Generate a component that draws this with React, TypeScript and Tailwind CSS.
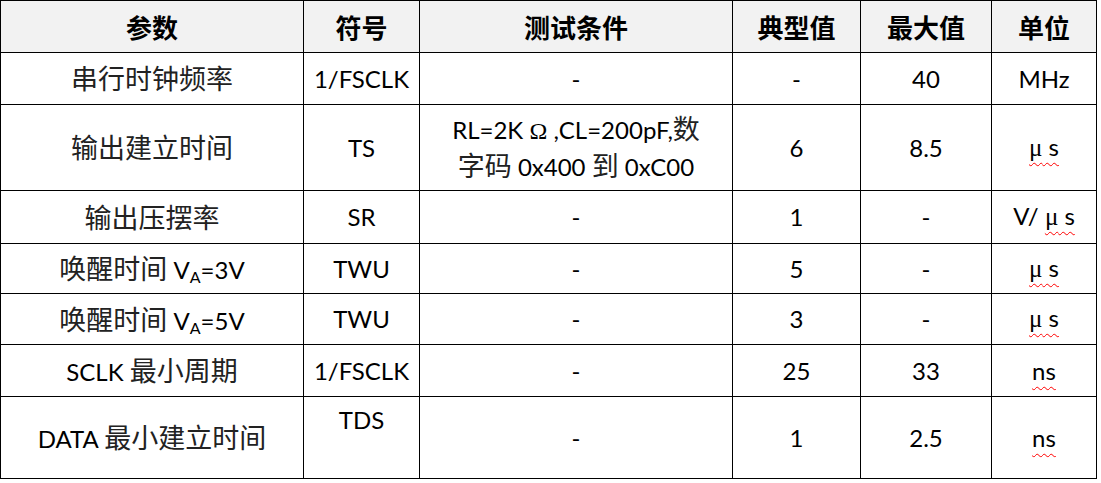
import React from "react";

const C = ({ children }: { children: React.ReactNode }) => (
  <span className="text-[27px] font-['Noto_Sans_CJK_SC',sans-serif] text-[#222]">{children}</span>
);

const Mu = () => (
  <span className="underline decoration-wavy decoration-[#ff0000] decoration-1 underline-offset-[6px] [text-decoration-skip-ink:none]">
    <span className="font-['Liberation_Serif',serif] text-[25px]">μ</span> s
  </span>
);

const NS = () => (
  <span className="underline decoration-wavy decoration-[#ff0000] decoration-1 underline-offset-[6px] [text-decoration-skip-ink:none]">
    ns
  </span>
);

const Sub = ({ children }: { children: React.ReactNode }) => (
  <span className="text-[16px] align-[-4px]">{children}</span>
);

type Cell = React.ReactNode;

const rows: Cell[][] = [
  [<C>串行时钟频率</C>, "1/FSCLK", "-", "-", "40", "MHz"],
  [
    <C>输出建立时间</C>,
    "TS",
    <div className="leading-[34px]">
      <div>
        RL=2K <span className="font-['Liberation_Serif',serif]">Ω</span> ,CL=200pF,<C>数</C>
      </div>
      <div>
        <C>字码</C> 0x400 <C>到</C> 0xC00
      </div>
    </div>,
    "6",
    "8.5",
    <Mu />,
  ],
  [<C>输出压摆率</C>, "SR", "-", "1", "-", <span>V/ <Mu /></span>],
  [<span><C>唤醒时间</C> V<Sub>A</Sub>=3V</span>, "TWU", "-", "5", "-", <Mu />],
  [<span><C>唤醒时间</C> V<Sub>A</Sub>=5V</span>, "TWU", "-", "3", "-", <Mu />],
  [<span>SCLK <C>最小周期</C></span>, "1/FSCLK", "-", "25", "33", <NS />],
  [<span>DATA <C>最小建立时间</C></span>, "TDS", "-", "1", "2.5", <NS />],
];

const headers = ["参数", "符号", "测试条件", "典型值", "最大值", "单位"];

export default function App() {
  return (
    <div className="w-[1101px] h-[483px] bg-white font-['Lato','Noto_Sans_CJK_SC',sans-serif] text-[24px] text-black">
      <div className="grid w-fit grid-cols-[302px_115px_312px_127px_130px_104px] grid-rows-[51px_51px_85px_52px_49px_50px_51px_81px] gap-px bg-black p-px">
        {headers.map((h) => (
          <div
            key={h}
            className="flex items-center justify-center bg-[#f2f2f2] font-['Noto_Sans_CJK_SC',sans-serif] text-[26px] font-bold text-black"
          >
            {h}
          </div>
        ))}
        {rows.map((r, ri) =>
          r.map((c, ci) => {
            const isTDS = ri === 6 && ci === 1;
            return (
              <div
                key={`${ri}-${ci}`}
                className={
                  isTDS
                    ? "flex items-start justify-center bg-white pt-[8px] text-center leading-[30px]"
                    : "flex items-center justify-center bg-white text-center"
                }
              >
                {c}
              </div>
            );
          })
        )}
      </div>
    </div>
  );
}
